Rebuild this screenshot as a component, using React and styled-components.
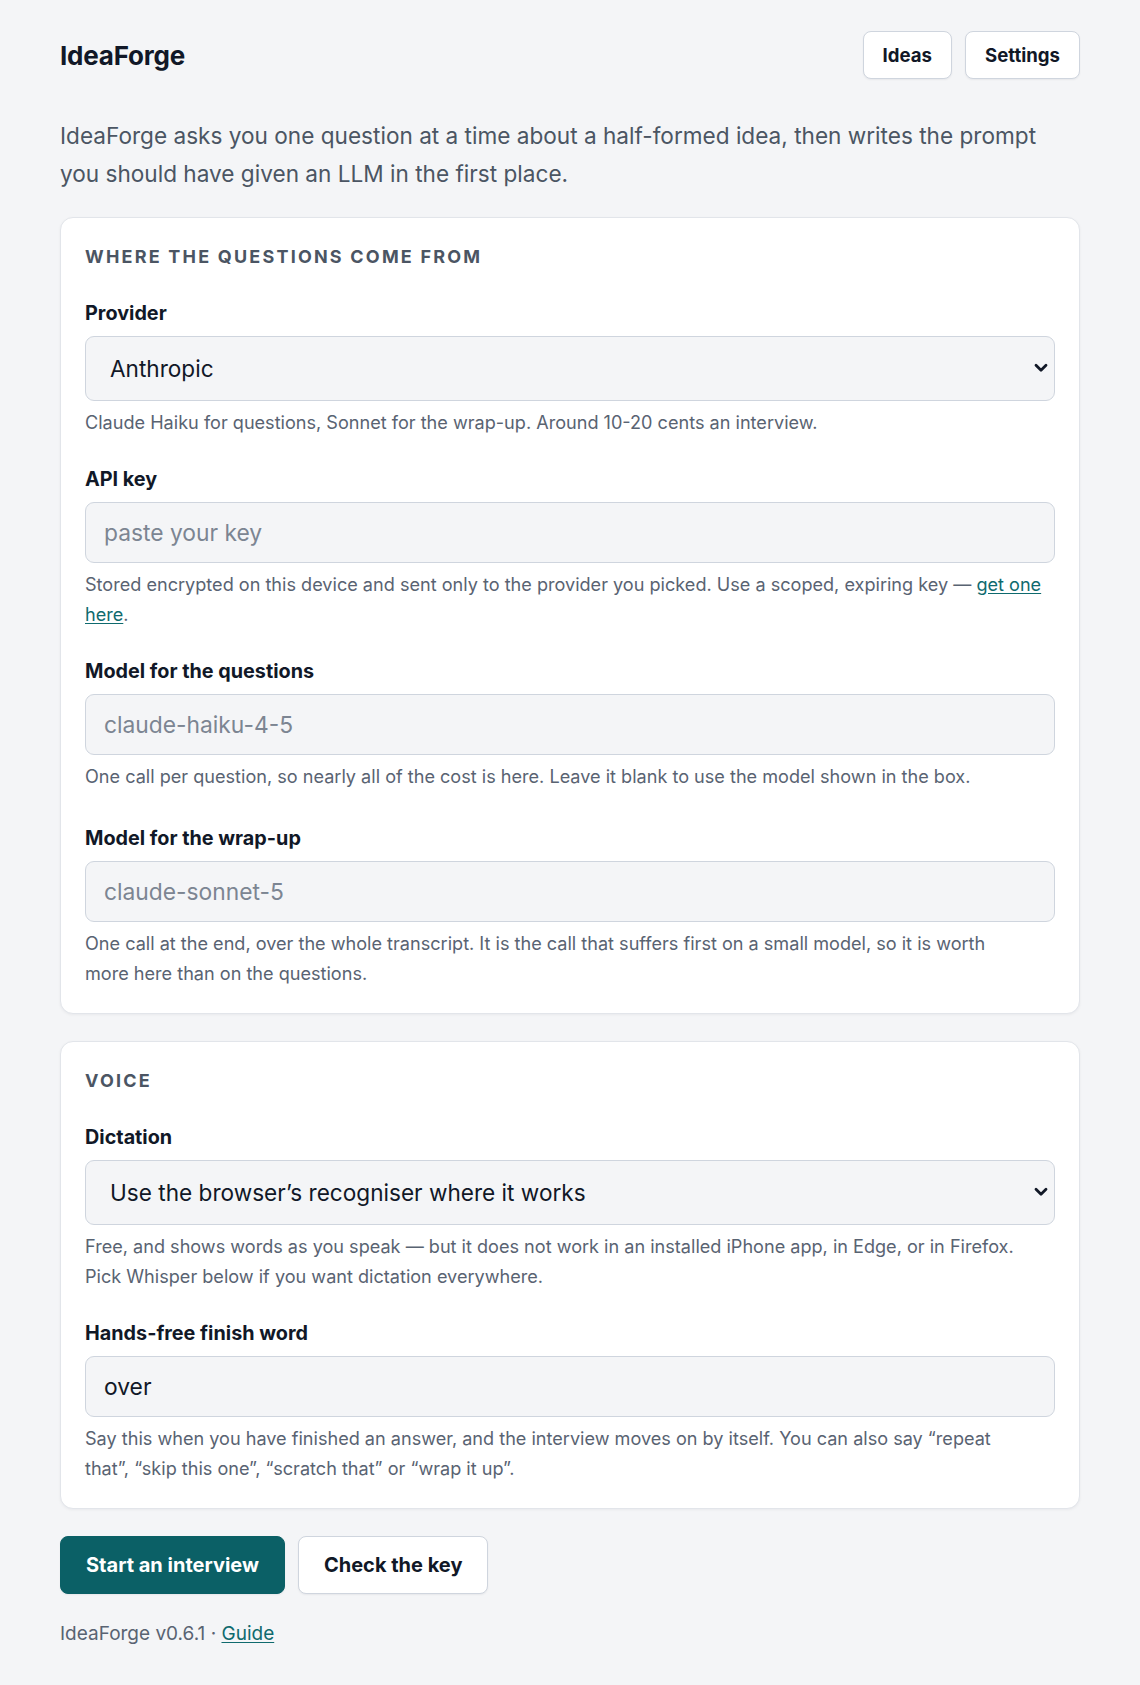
import styled, { createGlobalStyle } from "styled-components";

const GlobalStyle = createGlobalStyle`
  html, body {
    margin: 0;
    padding: 0;
    background: #f4f5f7;
  }
  body {
    font-family: Inter, "Noto Sans", sans-serif;
    color: #111827;
  }
  * {
    box-sizing: border-box;
  }
`;

const Page = styled.div`
  max-width: 1020px;
  margin: 0 auto;
  padding: 31px 0 36px;
`;

const Header = styled.header`
  display: flex;
  justify-content: space-between;
  align-items: center;
`;

const Title = styled.h1`
  margin: 0;
  font-size: 26px;
  font-weight: 700;
  letter-spacing: -0.2px;
  color: #111827;
`;

const Nav = styled.nav`
  display: flex;
  gap: 13px;
`;

const Button = styled.button`
  font-family: inherit;
  font-weight: 700;
  font-size: ${(props) => (props.$large ? "20px" : "18.6px")};
  height: ${(props) => (props.$large ? "58px" : "48px")};
  padding: 0 ${(props) => (props.$large ? "25px" : "19px")};
  border-radius: 8px;
  cursor: pointer;
  border: ${(props) =>
    props.$primary ? "1.5px solid #0b6066" : "1.5px solid #cfd5de"};
  background-color: ${(props) => (props.$primary ? "#0b6066" : "#ffffff")};
  color: ${(props) => (props.$primary ? "#ffffff" : "#111827")};
  box-shadow: 0 1px 2px rgba(17, 24, 39, 0.06);
`;

const Intro = styled.p`
  margin: 38px 0 24px;
  font-size: 22.6px;
  line-height: 37.8px;
  color: #4b5563;
`;

const Card = styled.section`
  background: #ffffff;
  border: 1px solid #e2e5ea;
  border-radius: 13px;
  padding: 24px 24px 25px;
  margin-bottom: 27px;
  box-shadow: 0 1px 3px rgba(17, 24, 39, 0.05);
`;

const SectionTitle = styled.h2`
  margin: 0 0 27px;
  font-size: 18px;
  line-height: 30px;
  font-weight: 700;
  letter-spacing: 2.2px;
  text-transform: uppercase;
  color: #4b5563;
`;

const Field = styled.div`
  margin-top: ${(props) => props.$gap || "28px"};

  &:first-of-type {
    margin-top: 0;
  }
`;

const Label = styled.label`
  display: block;
  font-size: 19.8px;
  line-height: 28px;
  font-weight: 700;
  color: #111827;
  margin-bottom: 9px;
`;

const SelectWrap = styled.div`
  position: relative;
`;

const Select = styled.select`
  display: block;
  width: 100%;
  height: 65px;
  padding: 0 44px 0 24px;
  font-family: inherit;
  font-size: 22.6px;
  color: #111827;
  background-color: #f4f5f7;
  border: 1.5px solid #cfd5de;
  border-radius: 9px;
  outline: none;
  appearance: none;
  -webkit-appearance: none;
`;

const Chevron = styled.svg`
  position: absolute;
  right: 7px;
  top: 50%;
  width: 14px;
  height: 10px;
  transform: translateY(-50%);
  pointer-events: none;
`;

const Input = styled.input`
  display: block;
  width: 100%;
  height: 61px;
  padding: 0 18px;
  font-family: inherit;
  font-size: 22.8px;
  color: #111827;
  background-color: #f4f5f7;
  border: 1.5px solid #cfd5de;
  border-radius: 9px;
  outline: none;

  &::placeholder {
    color: #7c8592;
  }
`;

const Help = styled.p`
  margin: 6px 0 0;
  font-size: 18.1px;
  line-height: 30px;
  color: #596372;
`;

const Link = styled.a`
  color: #0f6a6e;
  text-decoration: underline;
  text-underline-offset: 2px;
`;

const Actions = styled.div`
  display: flex;
  gap: 13px;
  margin-top: 26px;
`;

const Footer = styled.footer`
  margin-top: 25px;
  font-size: 19px;
  line-height: 30px;
  color: #596372;
`;

const Dropdown = ({ id, value, children }) => (
  <SelectWrap>
    <Select id={id} defaultValue={value}>
      {children}
    </Select>
    <Chevron viewBox="0 0 14 10" aria-hidden="true">
      <polyline
        points="2,2.2 7,7.2 12,2.2"
        fill="none"
        stroke="#111827"
        strokeWidth="2.8"
        strokeLinecap="round"
        strokeLinejoin="round"
      />
    </Chevron>
  </SelectWrap>
);

export default function App() {
  return (
    <>
      <GlobalStyle />
      <Page>
        <Header>
          <Title>IdeaForge</Title>
          <Nav>
            <Button>Ideas</Button>
            <Button>Settings</Button>
          </Nav>
        </Header>

        <Intro>
          IdeaForge asks you one question at a time about a half-formed idea,
          then writes the prompt you should have given an LLM in the first
          place.
        </Intro>

        <Card>
          <SectionTitle>Where the questions come from</SectionTitle>
          <Field>
            <Label htmlFor="provider">Provider</Label>
            <Dropdown id="provider" value="anthropic">
              <option value="anthropic">Anthropic</option>
              <option value="openai">OpenAI</option>
            </Dropdown>
            <Help>
              Claude Haiku for questions, Sonnet for the wrap-up. Around 10-20
              cents an interview.
            </Help>
          </Field>
          <Field>
            <Label htmlFor="key">API key</Label>
            <Input id="key" type="text" placeholder="paste your key" />
            <Help>
              Stored encrypted on this device and sent only to the provider you
              picked. Use a scoped, expiring key — <Link href="#">get one here</Link>.
            </Help>
          </Field>
          <Field>
            <Label htmlFor="qmodel">Model for the questions</Label>
            <Input id="qmodel" type="text" placeholder="claude-haiku-4-5" />
            <Help>
              One call per question, so nearly all of the cost is here. Leave it
              blank to use the model shown in the box.
            </Help>
          </Field>
          <Field $gap="33px">
            <Label htmlFor="wmodel">Model for the wrap-up</Label>
            <Input id="wmodel" type="text" placeholder="claude-sonnet-5" />
            <Help>
              One call at the end, over the whole transcript. It is the call that
              suffers first on a small model, so it is worth
              <br />
              more here than on the questions.
            </Help>
          </Field>
        </Card>

        <Card>
          <SectionTitle>Voice</SectionTitle>
          <Field>
            <Label htmlFor="dictation">Dictation</Label>
            <Dropdown id="dictation" value="browser">
              <option value="browser">
                Use the browser’s recogniser where it works
              </option>
              <option value="whisper">Whisper</option>
            </Dropdown>
            <Help>
              Free, and shows words as you speak — but it does not work in an
              installed iPhone app, in Edge, or in Firefox.
              <br />
              Pick Whisper below if you want dictation everywhere.
            </Help>
          </Field>
          <Field>
            <Label htmlFor="finish">Hands-free finish word</Label>
            <Input id="finish" type="text" defaultValue="over" />
            <Help>
              Say this when you have finished an answer, and the interview moves
              on by itself. You can also say “repeat
              <br />
              that”, “skip this one”, “scratch that” or “wrap it up”.
            </Help>
          </Field>
        </Card>

        <Actions>
          <Button $primary $large>
            Start an interview
          </Button>
          <Button $large>Check the key</Button>
        </Actions>

        <Footer>
          IdeaForge v0.6.1 · <Link href="#">Guide</Link>
        </Footer>
      </Page>
    </>
  );
}
